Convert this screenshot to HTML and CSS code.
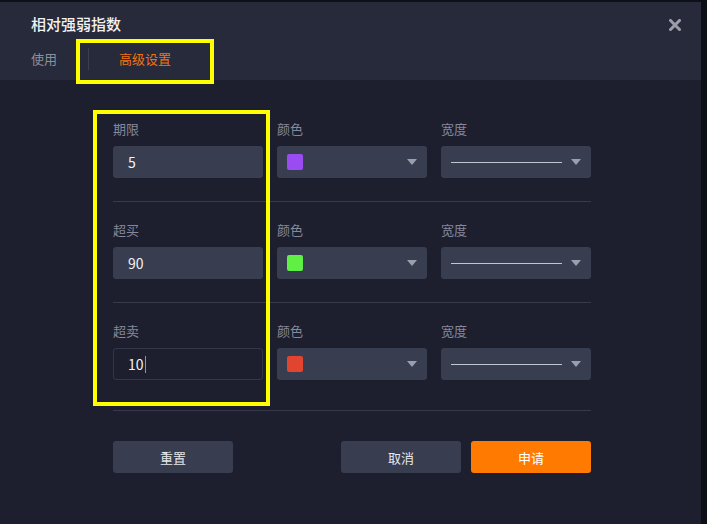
FILE: index.html
```html
<!DOCTYPE html>
<html lang="zh-CN">
<head>
<meta charset="utf-8">
<title>相对强弱指数</title>
<link rel="stylesheet" href="styles.css">
</head>
<body>
<div class="dialog">
  <div class="header">
    <div class="title-row">
      <div class="title">相对强弱指数</div>
      <svg class="close" width="12" height="12" viewBox="0 0 12 12"><path d="M1.5 1.5 L10.5 10.5 M10.5 1.5 L1.5 10.5" stroke="#9c9ea9" stroke-width="3" stroke-linecap="square"/></svg>
    </div>
    <div class="tabs">
      <span class="tab">使用</span>
      <span class="tab-sep"></span>
      <span class="tab active">高级设置</span>
    </div>
  </div>
  <div class="body">
    <div class="row">
      <div class="field"><div class="label">期限</div><div class="input">5</div></div>
      <div class="field"><div class="label">颜色</div><div class="select"><span class="swatch purple"></span><span class="arrow"></span></div></div>
      <div class="field"><div class="label">宽度</div><div class="select"><span class="line"></span><span class="arrow"></span></div></div>
    </div>
    <div class="row">
      <div class="field"><div class="label">超买</div><div class="input">90</div></div>
      <div class="field"><div class="label">颜色</div><div class="select"><span class="swatch green"></span><span class="arrow"></span></div></div>
      <div class="field"><div class="label">宽度</div><div class="select"><span class="line"></span><span class="arrow"></span></div></div>
    </div>
    <div class="row last">
      <div class="field"><div class="label">超卖</div><div class="input focused">10<span class="caret"></span></div></div>
      <div class="field"><div class="label">颜色</div><div class="select"><span class="swatch red"></span><span class="arrow"></span></div></div>
      <div class="field"><div class="label">宽度</div><div class="select"><span class="line"></span><span class="arrow"></span></div></div>
    </div>
    <div class="buttons">
      <button class="btn">重置</button>
      <div class="spacer"></div>
      <button class="btn">取消</button>
      <button class="btn primary">申请</button>
    </div>
  </div>
  <div class="mark mark-tab"></div>
  <div class="mark mark-col"></div>
</div>
</body>
</html>
```
FILE: styles.css
```css
* { box-sizing: border-box; }
html, body { margin: 0; padding: 0; }
body {
  background: #0e1018;
  font-family: "Noto Sans CJK SC", "Noto Sans", sans-serif;
  width: 707px;
  height: 524px;
  overflow: hidden;
}
.dialog {
  position: relative;
  width: 701px;
  height: 522px;
  margin-top: 2px;
  background: #1d1f2f;
}
.header {
  background: #262a3a;
  height: 78px;
  padding: 0 0 0 31px;
}
.title-row {
  display: flex;
  align-items: center;
  height: 44px;
  padding-right: 20px;
}
.title {
  flex: 1;
  color: #f2f2f4;
  font-size: 15px;
  font-weight: 500;
  line-height: 20px;
}
.close { display: block; margin-top: 2px; }
.tabs {
  display: flex;
  align-items: center;
  height: 26px;
}
.tab {
  font-size: 13px;
  color: #8d909c;
  line-height: 18px;
}
.tab-sep {
  width: 1px;
  height: 22px;
  background: #3a3e4f;
  margin: 0 30px 0 31px;
}
.tab.active { color: #f07410; }
.body {
  padding: 21px 0 0 113px;
}
.row {
  display: grid;
  grid-template-columns: 150px 150px 150px;
  column-gap: 14px;
  width: 478px;
  padding: 20px 0 23px;
  border-bottom: 1px solid #373a4b;
}
.row.last { padding-bottom: 30px; }
.label {
  font-size: 13px;
  line-height: 16px;
  color: #85889a;
  margin-bottom: 9px;
}
.input {
  height: 32px;
  background: #393d50;
  border-radius: 3px;
  color: #f2f2f4;
  font-size: 14px;
  line-height: 32px;
  padding-left: 15px;
  display: flex;
  align-items: center;
}
.input.focused {
  background: #1d1f2f;
  border: 1px solid #33374a;
  padding-left: 14px;
}
.caret {
  display: inline-block;
  width: 1px;
  height: 17px;
  background: #ff7a00;
  margin-left: 1px;
}
.select {
  height: 32px;
  background: #393d50;
  border-radius: 3px;
  display: flex;
  align-items: center;
  padding: 0 10px;
}
.swatch {
  width: 16px;
  height: 16px;
  border-radius: 2px;
  flex: none;
}
.swatch.purple { background: #9a4bf2; }
.swatch.green { background: #5fef45; }
.swatch.red { background: #e1452f; }
.select .swatch { margin-right: auto; }
.line {
  flex: none;
  width: 111px;
  height: 1px;
  background: #c4c6cf;
  margin-right: auto;
}
.arrow {
  flex: none;
  width: 0;
  height: 0;
  border-left: 5px solid transparent;
  border-right: 5px solid transparent;
  border-top: 6px solid #9c9eab;
}
.buttons {
  display: flex;
  width: 478px;
  margin-top: 30px;
  gap: 10px;
}
.spacer { flex: 1; }
.btn {
  width: 120px;
  height: 32px;
  border: none;
  border-radius: 3px;
  background: #393d50;
  color: #e6e7eb;
  font-family: "Noto Sans CJK SC", "Noto Sans", sans-serif;
  font-size: 13px;
  padding: 0;
}
.btn.primary { background: #ff7a00; color: #ffffff; }
.mark {
  position: absolute;
  border: 4px solid #ffff00;
}
.mark-tab { left: 76px; top: 37px; width: 138px; height: 45px; }
.mark-col { left: 93px; top: 108px; width: 177px; height: 296px; }
```
